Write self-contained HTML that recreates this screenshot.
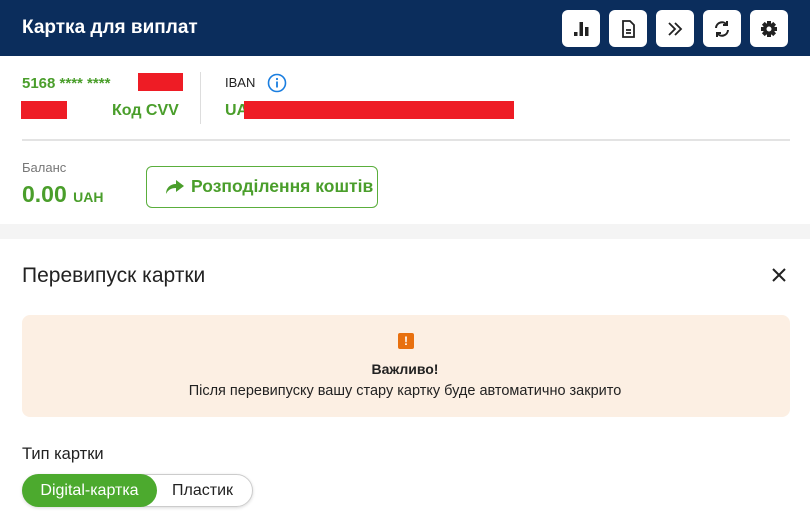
<!DOCTYPE html>
<html><head><meta charset="utf-8"><style>
*{margin:0;padding:0;box-sizing:border-box}
body{width:810px;height:521px;overflow:hidden;background:#fff;font-family:"Liberation Sans",sans-serif;position:relative}
.a{position:absolute;white-space:nowrap}
.hdr{position:absolute;left:0;top:0;width:810px;height:56px;background:#0b2d5c}
.btn{position:absolute;top:10px;width:38px;height:37px;background:#fff;border-radius:6px;display:flex;align-items:center;justify-content:center}
.g{color:#4a9e2b}
.red{position:absolute;background:#ee1c25}
</style></head><body>
<div class="hdr"></div>
<div class="a" style="left:22px;top:17px;color:#fff;font-size:19px;font-weight:bold">Картка для виплат</div>
<div class="btn" style="left:562px"><svg width="20" height="20" viewBox="0 0 20 20"><rect x="3" y="13" width="3.5" height="4" fill="#222"/><rect x="8.5" y="3" width="3.5" height="14" fill="#222"/><rect x="14" y="8" width="3.5" height="9" fill="#222"/></svg></div>
<div class="btn" style="left:609px"><svg width="20" height="20" viewBox="0 0 20 20" fill="none" stroke="#222" stroke-width="1.8"><path d="M5 2h7l4 4v12H5z"/><path d="M8 11h5M8 14h5"/></svg></div>
<div class="btn" style="left:656px"><svg width="20" height="20" viewBox="0 0 20 20" fill="none" stroke="#222" stroke-width="1.8"><path d="M4 4l6 6-6 6M10 4l6 6-6 6"/></svg></div>
<div class="btn" style="left:703px"><svg width="20" height="20" viewBox="0 0 20 20" fill="none" stroke="#222" stroke-width="2"><path d="M4 9a6 6 0 0 1 11-3"/><path d="M16 11a6 6 0 0 1-11 3"/><path d="M15 2v4h-4M5 18v-4h4"/></svg></div>
<div class="btn" style="left:750px"><svg width="20" height="20" viewBox="0 0 20 20"><g fill="#222"><circle cx="10" cy="10" r="6"/><rect x="8" y="2" width="4" height="16"/><rect x="2" y="8" width="16" height="4"/><rect x="8" y="2" width="4" height="16" transform="rotate(45 10 10)"/><rect x="8" y="2" width="4" height="16" transform="rotate(-45 10 10)"/></g><circle cx="10" cy="10" r="2.5" fill="#fff"/></svg></div>

<div class="a g" style="left:22px;top:75px;font-size:15px;font-weight:bold">5168 **** ****</div>
<div class="red" style="left:138px;top:73px;width:45px;height:18px"></div>
<div class="red" style="left:21px;top:101px;width:46px;height:18px"></div>
<div class="a g" style="left:112px;top:102px;font-size:16px;font-weight:bold">Код CVV</div>
<div style="position:absolute;left:200px;top:72px;width:1px;height:52px;background:#ddd"></div>
<div class="a" style="left:225px;top:75px;font-size:13px;color:#222">IBAN</div>
<svg class="a" style="left:267px;top:73px" width="20" height="20" viewBox="0 0 20 20"><circle cx="10" cy="10" r="8.5" fill="none" stroke="#1a7ee0" stroke-width="1.6"/><rect x="9.1" y="8.5" width="1.8" height="6" fill="#1a7ee0"/><circle cx="10" cy="6" r="1.1" fill="#1a7ee0"/></svg>
<div class="a g" style="left:225px;top:102px;font-size:16px;font-weight:bold">UA</div>
<div class="red" style="left:244px;top:101px;width:270px;height:18px"></div>
<div style="position:absolute;left:22px;top:139px;width:768px;height:2px;background:#e3e3e3"></div>
<div class="a" style="left:22px;top:160px;font-size:13px;color:#777">Баланс</div>
<div class="a g" style="left:22px;top:181px;font-size:23px;font-weight:bold">0.00 <span style="font-size:14px">UAH</span></div>
<div style="position:absolute;left:146px;top:166px;width:232px;height:42px;border:1px solid #5aae3c;border-radius:6px"></div>
<svg class="a" style="left:165px;top:179px" width="20" height="16" viewBox="0 0 20 16"><path d="M11 1l8 6-8 6V9C6 9 3 11 1 15 1 9 5 5 11 5z" fill="#4a9e2b"/></svg>
<div class="a g" style="left:191px;top:176px;font-size:17.5px;font-weight:bold">Розподілення коштів</div>
<div style="position:absolute;left:0;top:224px;width:810px;height:15px;background:#f4f4f4"></div>
<div class="a" style="left:22px;top:264px;font-size:21px;color:#222">Перевипуск картки</div>
<svg class="a" style="left:771px;top:267px" width="16" height="16" viewBox="0 0 16 16"><path d="M2 2l12 12M14 2L2 14" stroke="#222" stroke-width="2"/></svg>
<div style="position:absolute;left:22px;top:315px;width:768px;height:102px;background:#fcefe3;border-radius:8px"></div>
<div style="position:absolute;left:398px;top:333px;width:16px;height:16px;background:#e8700f;border-radius:2px;color:#fff;font-size:12px;font-weight:bold;text-align:center;line-height:16px">!</div>
<div class="a" style="left:0;width:810px;text-align:center;top:361px;font-size:14px;font-weight:bold;color:#222">Важливо!</div>
<div class="a" style="left:0;width:810px;text-align:center;top:383px;font-size:14.5px;color:#222">Після перевипуску вашу стару картку буде автоматично закрито</div>
<div class="a" style="left:22px;top:445px;font-size:16.5px;color:#222">Тип картки</div>
<div style="position:absolute;left:22px;top:474px;width:231px;height:33px;border:1px solid #ccc;border-radius:17px;box-shadow:0 1px 3px rgba(0,0,0,.15)"></div>
<div style="position:absolute;left:22px;top:474px;width:135px;height:33px;background:#4caa2e;border-radius:17px;color:#fff;font-size:16px;text-align:center;line-height:33px">Digital-картка</div>
<div class="a" style="left:172px;top:482px;font-size:16px;color:#222">Пластик</div>
</body></html>
